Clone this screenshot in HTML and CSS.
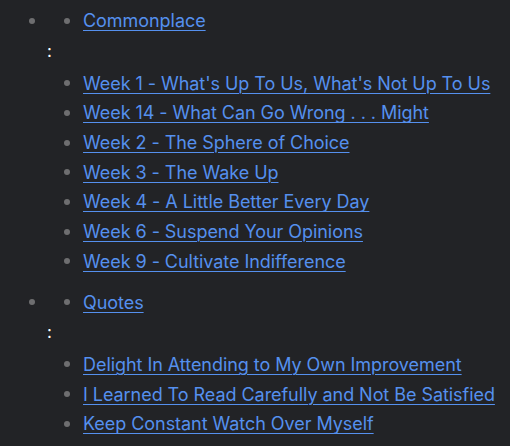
FILE: index.html
```html
<!DOCTYPE html>
<html>
<head>
<meta charset="utf-8">
<link rel="stylesheet" href="styles.css">
</head>
<body>
<div class="tree">
  <div class="group">
    <div class="row head"><span class="dot outer"></span><span class="dot"></span><a href="#">Commonplace</a></div>
    <div class="colon">:</div>
    <ul class="sub">
      <li class="row"><span class="dot"></span><a href="#">Week 1 - What's Up To Us, What's Not Up To Us</a></li>
      <li class="row"><span class="dot"></span><a href="#">Week 14 - What Can Go Wrong . . . Might</a></li>
      <li class="row"><span class="dot"></span><a href="#">Week 2 - The Sphere of Choice</a></li>
      <li class="row"><span class="dot"></span><a href="#">Week 3 - The Wake Up</a></li>
      <li class="row"><span class="dot"></span><a href="#">Week 4 - A Little Better Every Day</a></li>
      <li class="row"><span class="dot"></span><a href="#">Week 6 - Suspend Your Opinions</a></li>
      <li class="row"><span class="dot"></span><a href="#">Week 9 - Cultivate Indifference</a></li>
    </ul>
  </div>
  <div class="group">
    <div class="row head"><span class="dot outer"></span><span class="dot"></span><a href="#">Quotes</a></div>
    <div class="colon">:</div>
    <ul class="sub">
      <li class="row"><span class="dot"></span><a href="#">Delight In Attending to My Own Improvement</a></li>
      <li class="row"><span class="dot"></span><a href="#">I Learned To Read Carefully and Not Be Satisfied</a></li>
      <li class="row"><span class="dot"></span><a href="#">Keep Constant Watch Over Myself</a></li>
    </ul>
  </div>
</div>
</body>
</html>
```
FILE: styles.css
```css
html, body {
  margin: 0;
  padding: 0;
  background: #222326;
}
body {
  font-family: Inter, "Noto Sans", sans-serif;
  font-size: 18px;
  color: #e6e6e6;
  overflow: hidden;
}
.tree {
  display: flex;
  flex-direction: column;
}
.group {
  padding: 5px 0;
  display: flex;
  flex-direction: column;
}
.row {
  display: flex;
  align-items: center;
  height: 29.7px;
  padding-left: 64px;
}
.row.head {
  padding-top: 1px;
  padding-left: 29px;
}
.dot {
  width: 6px;
  height: 6px;
  border-radius: 50%;
  background: #6e6e70;
  flex: none;
  margin-right: 13px;
}
.dot.outer {
  margin-right: 29px;
}
.colon {
  height: 29.7px;
  line-height: 29.7px;
  margin: 1px 0 2px 47px;
  color: #ffffff;
  font-size: 17px;
  font-weight: 400;
}
.sub {
  list-style: none;
  margin: 0;
  padding: 0;
}
a {
  color: #5590ee;
  text-decoration: underline;
  text-underline-offset: 3px;
  text-decoration-thickness: 1px;
  white-space: nowrap;
  letter-spacing: -0.05px;
}
```
